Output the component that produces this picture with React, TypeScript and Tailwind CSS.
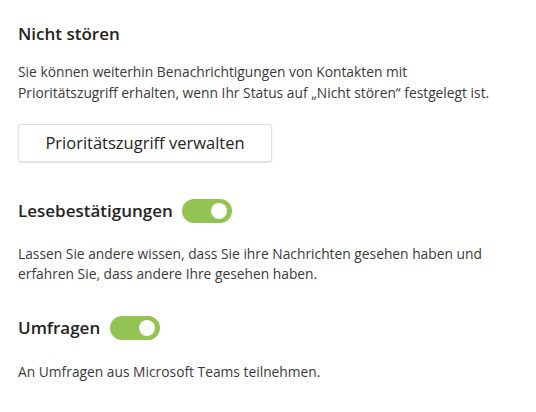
import React from "react";

function Toggle() {
  return (
    <div className="flex h-6 w-[50px] items-center justify-end rounded-full bg-[#92c353] pr-[5px]">
      <div className="h-4 w-4 rounded-full bg-white" />
    </div>
  );
}

export default function App() {
  return (
    <div className="min-h-[412px] w-[536px] bg-white px-[18px] pt-[22px] font-['Open_Sans',sans-serif] text-[#252423]">
      <h2 className="text-[17px] font-semibold leading-6">Nicht stören</h2>
      <p className="mt-[15px] text-[13.8px] leading-[21px] text-[#3b3a39]">
        Sie können weiterhin Benachrichtigungen von Kontakten mit
        <br />
        Prioritätszugriff erhalten, wenn Ihr Status auf „Nicht stören“ festgelegt ist.
      </p>
      <button className="mt-[21px] flex h-[38px] w-[254px] items-center justify-center rounded-[3px] border border-[#e1dfdd] bg-white text-[16.5px] text-[#252423] shadow-[0_1px_2px_rgba(0,0,0,0.12)]">
        Prioritätszugriff verwalten
      </button>

      <div className="mt-[37px] flex items-center gap-[9px]">
        <h2 className="text-[17px] font-semibold leading-6">Lesebestätigungen</h2>
        <Toggle />
      </div>
      <p className="mt-[21px] text-[13.8px] leading-5 text-[#3b3a39]">
        Lassen Sie andere wissen, dass Sie ihre Nachrichten gesehen haben und
        <br />
        erfahren Sie, dass andere Ihre gesehen haben.
      </p>

      <div className="mt-[32px] flex items-center gap-[10px]">
        <h2 className="text-[17px] font-semibold leading-6">Umfragen</h2>
        <Toggle />
      </div>
      <p className="mt-[22px] text-[13.8px] leading-5 text-[#3b3a39]">
        An Umfragen aus Microsoft Teams teilnehmen.
      </p>
    </div>
  );
}
